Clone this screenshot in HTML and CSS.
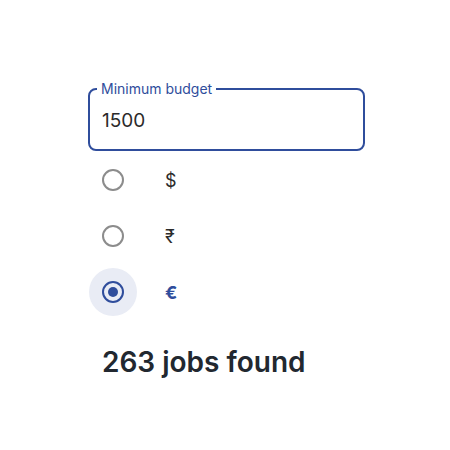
FILE: index.html
```html
<!DOCTYPE html>
<html>
<head>
<meta charset="utf-8">
<link rel="stylesheet" href="styles.css">
</head>
<body>
<div class="page">
  <fieldset class="field">
    <legend class="field-label">Minimum budget</legend>
    <div class="field-value">1500</div>
  </fieldset>
  <div class="options">
    <div class="option">
      <span class="radio-wrap"><span class="radio"></span></span>
      <span class="option-label">$</span>
    </div>
    <div class="option">
      <span class="radio-wrap"><span class="radio"></span></span>
      <span class="option-label">₹</span>
    </div>
    <div class="option">
      <span class="radio-wrap selected"><span class="radio checked"><span class="dot"></span></span></span>
      <span class="option-label active">€</span>
    </div>
  </div>
  <div class="result">263 jobs found</div>
</div>
</body>
</html>
```
FILE: styles.css
```css
html, body {
  margin: 0;
  padding: 0;
  background: #ffffff;
  font-family: Inter, "Noto Sans", sans-serif;
}
.page {
  padding: 81px 0 0 88px;
  width: 277px;
}
.field {
  margin: 0;
  border: 2px solid #2f4d9c;
  border-radius: 8px;
  padding: 0 12px 0 12px;
  box-sizing: border-box;
  height: 70px;
}
.field-label {
  font-size: 14px;
  line-height: 16px;
  color: #2f4d9c;
  padding: 0 4px;
  margin-left: -5px;
}
.field-value {
  font-size: 19px;
  line-height: 24px;
  color: #2b2b2b;
  margin-top: 12px;
}
.options {
  display: flex;
  flex-direction: column;
  margin-top: 1px;
}
.option {
  display: flex;
  align-items: center;
  height: 56px;
}
.radio-wrap {
  width: 48px;
  height: 48px;
  margin-left: 1px;
  border-radius: 50%;
  display: flex;
  align-items: center;
  justify-content: center;
}
.radio-wrap.selected {
  background: #e9ecf5;
}
.radio {
  width: 22px;
  height: 22px;
  box-sizing: border-box;
  border: 2px solid #8c8c8c;
  border-radius: 50%;
  display: flex;
  align-items: center;
  justify-content: center;
}
.radio.checked {
  border-color: #2f4d9c;
}
.dot {
  width: 10px;
  height: 10px;
  border-radius: 50%;
  background: #2f4d9c;
}
.option-label {
  margin-left: 28px;
  font-size: 18px;
  color: #2b2b2b;
}
.option-label.active {
  color: #2f4d9c;
  font-weight: 700;
}
.result {
  margin-top: 26px;
  margin-left: 14px;
  font-size: 28px;
  line-height: 32px;
  font-weight: 600;
  color: #222830;
}
```
